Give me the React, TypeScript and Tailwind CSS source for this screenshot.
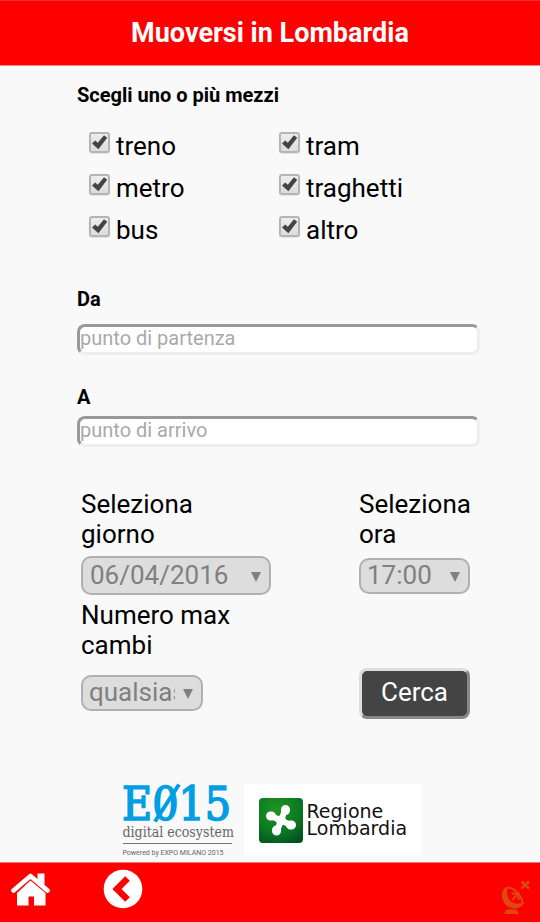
import React, { useState } from "react";

interface Mezzo {
  id: string;
  label: string;
}

const mezzi: Mezzo[] = [
  { id: "treno", label: "treno" },
  { id: "tram", label: "tram" },
  { id: "metro", label: "metro" },
  { id: "traghetti", label: "traghetti" },
  { id: "bus", label: "bus" },
  { id: "altro", label: "altro" },
];

const MezzoCheckbox: React.FC<{ mezzo: Mezzo }> = ({ mezzo }) => {
  const [checked, setChecked] = useState(true);

  return (
    <div className="flex items-start gap-1.5">
      <span className="mt-[3px] grid">
        <input
          id={mezzo.id}
          type="checkbox"
          checked={checked}
          onChange={() => setChecked(!checked)}
          className="peer col-start-1 row-start-1 h-[21px] w-[21px] appearance-none rounded-[3px] border-2 border-[#b5b5b5] bg-linear-to-b from-[#ededed] to-[#dcdcdc] shadow-[0_1px_1px_#e4e4e4]"
        />
        <svg
          viewBox="0 0 21 21"
          className="pointer-events-none invisible col-start-1 row-start-1 h-[21px] w-[21px] peer-checked:visible"
        >
          <path d="M3 11.500l3.200-3 2.600 2.300L15 3.200l3.200 2.600-8.800 11.400z" fill="#444" />
        </svg>
      </span>
      <label htmlFor={mezzo.id} className="text-[26px] leading-[34px]">
        {mezzo.label}
      </label>
    </div>
  );
};

interface SelectBoxProps {
  id: string;
  options: string[];
  size: string;
}

const SelectBox: React.FC<SelectBoxProps> = ({ id, options, size }) => (
  <div className="relative w-fit">
    <select
      id={id}
      className={`block appearance-none overflow-hidden rounded-[10px] border-2 border-[#b0b0b0] bg-[#ddd] pb-0.5 text-[26px] leading-[30px] text-[#808080] ${size}`}
    >
      {options.map((option) => (
        <option key={option}>{option}</option>
      ))}
    </select>
    <svg
      viewBox="0 0 10 10"
      className="pointer-events-none absolute top-1/2 right-2.5 -mt-1 h-2.5 w-2.5"
    >
      <path d="M0 0h10L5 10z" fill="#808080" />
    </svg>
  </div>
);

const EcosystemLogo = () => (
  <div className="w-[109px]">
    <svg viewBox="0 0 109 38" className="block h-[38px] w-[109px] overflow-visible">
      <text
        x="-1"
        y="36"
        fill="#009fe3"
        stroke="#009fe3"
        strokeWidth="1.6"
        className="font-['DejaVu_Serif_Condensed','DejaVu_Serif',serif] text-[46px] [font-stretch:condensed]"
      >
        E015
      </text>
      <path d="M32 37.500L56 0.500" stroke="#009fe3" strokeWidth="4" />
    </svg>
    <p className="font-['DejaVu_Serif_Condensed','DejaVu_Serif',serif] text-[14px] leading-5 whitespace-nowrap text-[#666]">
      digital ecosystem
    </p>
    <p className="mt-px border-t border-[#777] pt-1 font-[Roboto,sans-serif] text-[7px] leading-[10px] whitespace-nowrap text-[#666]">
      Powered by EXPO MILANO 2015
    </p>
  </div>
);

const RegioneLogo = () => (
  <div className="flex h-[72px] w-[177px] items-center bg-white pl-[15px]">
    <svg viewBox="0 0 44 45" className="h-[45px] w-11 shrink-0">
      <defs>
        <radialGradient id="verde" cx="0.4" cy="0.25" r="0.85">
          <stop offset="0" stopColor="#1f9322" />
          <stop offset="0.6" stopColor="#0b7a22" />
          <stop offset="1" stopColor="#045020" />
        </radialGradient>
      </defs>
      <rect width="44" height="45" rx="4" fill="url(#verde)" />
      <g stroke="#fff" strokeLinecap="round">
        <path d="M26 12L18 33M12 18L32 27" strokeWidth="6" />
        <path d="M26.500 11.500v1M17.500 33v-1M11.500 18h1M32.500 27h-1" strokeWidth="9" />
      </g>
      <circle cx="22" cy="22.500" r="5" fill="#fff" />
    </svg>
    <p className="ml-1 font-['DejaVu_Sans',sans-serif] text-[19px] leading-[17px] text-[#111]">
      Regione
      <br />
      Lombardia
    </p>
  </div>
);

const App: React.FC = () => {
  const [da, setDa] = useState("");
  const [a, setA] = useState("");

  return (
    <div className="flex min-h-screen flex-col bg-[#f9f9f9] font-[Roboto,sans-serif] text-black">
      <header className="border-t border-b border-t-[#e83030] border-b-[#e89090] bg-[#f00] py-4">
        <h1 className="text-center text-[27px] leading-8 font-bold text-white">
          Muoversi in Lombardia
        </h1>
      </header>

      <main className="flex-1 pt-[17px]">
        <form className="pr-[60px] pl-[77px]" onSubmit={(e) => e.preventDefault()}>
          <fieldset>
            <legend className="text-xl leading-6 font-bold">Scegli uno o più mezzi</legend>
            <div className="grid grid-cols-[190px_1fr] gap-y-2 pt-[22px] pl-3">
              {mezzi.map((mezzo) => (
                <MezzoCheckbox key={mezzo.id} mezzo={mezzo} />
              ))}
            </div>
          </fieldset>

          <label htmlFor="da" className="mt-10 block text-xl leading-6 font-bold">
            Da
          </label>
          <input
            id="da"
            value={da}
            onChange={(e) => setDa(e.target.value)}
            placeholder="punto di partenza"
            className="mt-[13px] block h-[31px] w-full rounded-lg border-3 border-t-[#999] border-r-[#eee] border-b-[#eee] border-l-[#999] bg-white pb-[3px] text-xl leading-6 placeholder:text-[#a9a9a9]"
          />

          <label htmlFor="a" className="mt-[30px] block text-xl leading-6 font-bold">
            A
          </label>
          <input
            id="a"
            value={a}
            onChange={(e) => setA(e.target.value)}
            placeholder="punto di arrivo"
            className="mt-[7px] block h-[31px] w-full rounded-lg border-3 border-t-[#999] border-r-[#eee] border-b-[#eee] border-l-[#999] bg-white pb-[3px] text-xl leading-6 placeholder:text-[#a9a9a9]"
          />

          <div className="mt-[42px] flex justify-between pr-2.5 pl-1 text-[26px] leading-[30px]">
            <div>
              <label htmlFor="giorno" className="block w-[150px]">
                Seleziona giorno
              </label>
              <div className="mt-[7px]">
                <SelectBox
                  id="giorno"
                  options={["06/04/2016", "07/04/2016", "08/04/2016"]}
                  size="h-[39px] w-[190px] pl-[7px] pr-6"
                />
              </div>
            </div>
            <div className="w-[111px]">
              <label htmlFor="ora" className="block">
                Seleziona ora
              </label>
              <div className="mt-[9px]">
                <SelectBox
                  id="ora"
                  options={["17:00", "18:00", "19:00"]}
                  size="h-9 w-[111px] pl-1.5 pr-6"
                />
              </div>
            </div>
          </div>

          <div className="mt-[5px] flex items-end justify-between pr-2.5 pl-1 text-[26px] leading-[30px]">
            <div className="pb-2">
              <label htmlFor="cambi" className="block w-[150px]">
                Numero max cambi
              </label>
              <div className="mt-[15px]">
                <SelectBox
                  id="cambi"
                  options={["qualsiasi", "0", "1", "2"]}
                  size="h-9 w-[122px] pl-1.5 pr-[26px]"
                />
              </div>
            </div>
            <button
              type="submit"
              className="h-[51px] w-[111px] rounded-lg border-3 border-t-[#ddd] border-r-[#888] border-b-[#888] border-l-[#ddd] bg-[#444] pb-1 text-white"
            >
              Cerca
            </button>
          </div>
        </form>

        <div className="mt-[65px] flex justify-center gap-3 pb-1 pl-[3px]">
          <EcosystemLogo />
          <RegioneLogo />
        </div>
      </main>

      <footer className="flex h-[60px] items-start border-t border-[#d88080] bg-[#f00] px-2.5 pt-2">
        <a href="#home" aria-label="Home">
          <svg viewBox="0 0 40 34" className="mt-px h-[34px] w-10" fill="#fff">
            <path d="M27.500 1.500h7v12l-7-6z" />
            <path d="M3.500 18.500L20.500 4l17 14.500" fill="none" stroke="#fff" strokeWidth="4.600" strokeLinecap="round" strokeLinejoin="round" />
            <path d="M20.500 8.500L35.500 21V33.500H24v-9h-5.500v9H7V21z" />
          </svg>
        </a>
        <a href="#indietro" aria-label="Indietro" className="-mt-0.5 ml-[53px]">
          <svg viewBox="0 0 40 40" className="h-10 w-10">
            <circle cx="20" cy="20" r="19.300" fill="#fff" />
            <path d="M24.500 9.500L14 20l10.500 10.500" fill="none" stroke="#f00" strokeWidth="6.500" />
          </svg>
        </a>
        <svg viewBox="0 0 28 34" className="mt-[9px] ml-auto h-[34px] w-7" fill="#dd4a10">
          <path d="M4 7C-2 12-1 20 4 25c5 5 12 4 17 0l-2-2C10 26 3 18 5.500 9z" />
          <path d="M4 8c6-2 15 5 17 16" stroke="#dd4a10" strokeWidth="1.800" fill="none" />
          <path d="M2 34l2.500-4.500h10L17 34z" />
          <path d="M9.500 13.500h7v6.500M16 14l-6 6" stroke="#dd4a10" strokeWidth="2" fill="none" />
          <path d="M19.500 1.500l7.500 7M27 1.500l-7.500 7" stroke="#dd4a10" strokeWidth="2.400" fill="none" />
        </svg>
      </footer>
    </div>
  );
};

export default App;
